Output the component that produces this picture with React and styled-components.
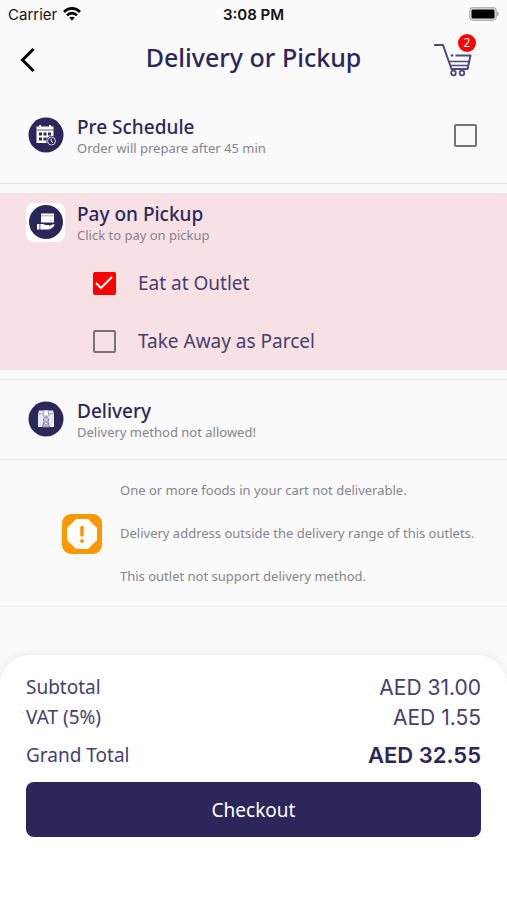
import { useState } from "react";
import styled, { createGlobalStyle } from "styled-components";

function App() {
  const [schedule, setSchedule] = useState(false);
  const [pickup, setPickup] = useState("eat");

  return (
    <>
      <GlobalStyle />
      <Page>
        <StatusBar>
          <Carrier>
            Carrier
            <WifiIcon />
          </Carrier>
          <Clock>3:08 PM</Clock>
          <BatteryIcon />
        </StatusBar>

        <Header>
          <BackButton type="button" aria-label="Back">
            <svg width="18" height="26" viewBox="0 0 18 26" fill="none" stroke="#000" strokeWidth="3">
              <path d="M15.500 2 L4.500 13 L15.500 24" />
            </svg>
          </BackButton>
          <Title>Delivery or Pickup</Title>
          <CartButton type="button" aria-label="Cart">
            <CartIcon />
            <Badge>2</Badge>
          </CartButton>
        </Header>

        <main>
          <Method>
            <IconTile>
              <CalendarIcon />
            </IconTile>
            <MethodText>
              <MethodName id="pre">Pre Schedule</MethodName>
              <MethodNote>Order will prepare after 45 min</MethodNote>
            </MethodText>
            <CheckBox
              labelledBy="pre"
              checked={schedule}
              onChange={() => setSchedule(!schedule)}
            />
          </Method>

          <PickupArea>
            <PickupMethod>
              <IconTile $white>
                <PayIcon />
              </IconTile>
              <MethodText>
                <MethodName>Pay on Pickup</MethodName>
                <MethodNote>Click to pay on pickup</MethodNote>
              </MethodText>
            </PickupMethod>
            <Option>
              <CheckBox checked={pickup === "eat"} onChange={() => setPickup("eat")} />
              Eat at Outlet
            </Option>
            <Option>
              <CheckBox checked={pickup === "parcel"} onChange={() => setPickup("parcel")} />
              Take Away as Parcel
            </Option>
          </PickupArea>

          <DeliveryMethod>
            <IconTile>
              <BoxIcon />
            </IconTile>
            <MethodText>
              <MethodName>Delivery</MethodName>
              <MethodNote>Delivery method not allowed!</MethodNote>
            </MethodText>
          </DeliveryMethod>

          <Warning>
            <WarningIcon />
            <WarningList>
              <li>One or more foods in your cart not deliverable.</li>
              <li>Delivery address outside the delivery range of this outlets.</li>
              <li>This outlet not support delivery method.</li>
            </WarningList>
          </Warning>
        </main>

        <Summary>
          <Row>
            <span>Subtotal</span>
            <Amount>AED 31.00</Amount>
          </Row>
          <Row>
            <span>VAT (5%)</span>
            <Amount>AED 1.55</Amount>
          </Row>
          <Row $total>
            <span>Grand Total</span>
            <Amount $bold>AED 32.55</Amount>
          </Row>
          <Checkout type="button">Checkout</Checkout>
        </Summary>
      </Page>
    </>
  );
}

export default App;

function CheckBox({ checked, onChange, labelledBy }) {
  return (
    <CheckWrap>
      <CheckInput
        type="checkbox"
        checked={checked}
        onChange={onChange}
        aria-labelledby={labelledBy}
      />
      {checked && (
        <svg width="24" height="24" viewBox="0 0 24 24" fill="none" stroke="#fff" strokeWidth="2">
          <path d="M4 12 L9 17 L20 6" />
        </svg>
      )}
    </CheckWrap>
  );
}

function WifiIcon() {
  return (
    <svg width="18" height="14" viewBox="0 0 18 14" fill="none" stroke="#000" strokeWidth="2.6">
      <path d="M1 5 C5.500 0.200 12.500 0.200 17 5" />
      <path d="M4 8.400 C6.800 5.400 11.200 5.400 14 8.400" />
      <path d="M9 13.500 L6.300 10.700 C7.800 9.300 10.200 9.300 11.700 10.700 Z" fill="#000" stroke="none" />
    </svg>
  );
}

function BatteryIcon() {
  return (
    <svg width="30" height="14" viewBox="0 0 30 14">
      <rect x="0.700" y="0.700" width="26.600" height="12.600" rx="3.500" fill="#ddd" stroke="#b4b4b4" strokeWidth="1.200" />
      <rect x="2.500" y="2.500" width="23" height="9" rx="1.500" fill="#000" />
      <path d="M28 4.500 C30.300 5.500 30.300 8.500 28 9.500 Z" fill="#aaa" />
    </svg>
  );
}

function CartIcon() {
  return (
    <svg width="40" height="34" viewBox="0 0 40 34" fill="none" stroke="#4d4a7c" strokeWidth="2">
      <path d="M1 2 H10 L18.500 26 H34.500 L37.500 12.500 H22.500" strokeLinejoin="round" />
      <path d="M16 18.500 H36 M17.500 22.500 H35" strokeWidth="1.500" />
      <circle cx="19" cy="12.500" r="1.300" fill="#4d4a7c" stroke="none" />
      <circle cx="20.500" cy="30" r="2.300" strokeWidth="1.800" />
      <circle cx="29" cy="30" r="2.300" strokeWidth="1.800" />
    </svg>
  );
}

function CalendarIcon() {
  return (
    <svg width="36" height="36" viewBox="0 0 36 36">
      <circle cx="18" cy="18" r="17.500" fill="#2b275a" />
      <path d="M8.500 9.500 H25.500 V26 H8.500 Z" fill="#fff" />
      <path d="M12 8 V12 M22 8 V12" stroke="#fff" strokeWidth="2" />
      <path d="M8.500 13 H25.500" stroke="#2b275a" strokeWidth="0.800" />
      <g fill="#2b275a">
        <rect x="11" y="15.500" width="3" height="3" />
        <rect x="15.500" y="15.500" width="3" height="3" />
        <rect x="20" y="15.500" width="3" height="3" />
        <rect x="11" y="20.500" width="3" height="3" />
        <rect x="15.500" y="20.500" width="3" height="3" />
      </g>
      <circle cx="23.500" cy="24" r="5.200" fill="#2b275a" />
      <circle cx="23.500" cy="24" r="4" fill="#2b275a" stroke="#d6d5e2" strokeWidth="1" />
      <path d="M23.200 21.500 V24.500 L25 25.500" fill="none" stroke="#fff" strokeWidth="1" />
    </svg>
  );
}

function PayIcon() {
  return (
    <svg width="36" height="36" viewBox="0 0 36 36">
      <circle cx="18" cy="18" r="17" fill="#2b275a" />
      <rect x="13" y="9.500" width="13" height="9" fill="#fff" />
      <path d="M13 11.800 H26" stroke="#aaa8c4" strokeWidth="1" />
      <path d="M22 16.500 H24.500" stroke="#f0b8b0" strokeWidth="1" />
      <rect x="9" y="20" width="2.500" height="5.500" fill="#fff" />
      <path d="M12.300 20 H15 L17.500 21 H20.500 C21.800 21 21.600 22.300 20.500 22.300 L25 20.300 C26.500 19.800 27 21 26 21.900 C24 24 22.500 25.500 20 25.500 H12.300 Z" fill="#fff" />
    </svg>
  );
}

function BoxIcon() {
  return (
    <svg width="36" height="36" viewBox="0 0 36 36">
      <circle cx="18" cy="18" r="17.500" fill="#2b275a" />
      <path d="M11 9.500 H25 L26 12.500 V26 H10 V12.500 Z" fill="#e9e8f1" />
      <path d="M10 12.800 H26" stroke="#8f8cae" strokeWidth="0.800" />
      <path d="M16 9.500 L15 15 H21 L20 9.500" fill="#fff" stroke="#8f8cae" strokeWidth="0.800" />
      <path d="M18 16 C15.500 16 14.800 19 16 20.500 L14.500 26 H21.500 L20 20.500 C21.200 19 20.500 16 18 16 Z" fill="#c7c5da" stroke="#77749c" strokeWidth="0.900" />
      <circle cx="18" cy="22.500" r="1.500" fill="#fff" stroke="#77749c" strokeWidth="0.800" />
    </svg>
  );
}

function WarningIcon() {
  return (
    <svg width="40" height="40" viewBox="0 0 40 40">
      <rect width="40" height="40" rx="9" fill="#ff9800" />
      <path d="M14 5 H26 L35 14 V26 L26 35 H14 L5 26 V14 Z" fill="#fff" />
      <path d="M20 13.500 V21" stroke="#ff9800" strokeWidth="3.600" strokeLinecap="round" />
      <circle cx="20" cy="27" r="2" fill="#ff9800" />
    </svg>
  );
}

const GlobalStyle = createGlobalStyle`
  * {
    box-sizing: border-box;
  }

  body {
    margin: 0;
    background-color: #fafafa;
    color: #2b275a;
    font-family: "Noto Sans", "Open Sans", sans-serif;
  }

  button {
    font-family: inherit;
    border: 0;
    padding: 0;
    background: none;
    cursor: pointer;
  }

  svg {
    display: block;
    flex-shrink: 0;
  }
`;

const Page = styled.div`
  min-height: 100vh;
  display: flex;
  flex-direction: column;
`;

const StatusBar = styled.div`
  height: 28px;
  padding: 0 8px;
  display: grid;
  grid-template-columns: 1fr auto 1fr;
  align-items: center;
  font-family: Inter, "Liberation Sans", sans-serif;
  font-size: 15px;
  color: #111111;

  > svg {
    justify-self: end;
  }
`;

const Carrier = styled.div`
  display: flex;
  align-items: center;
  gap: 6px;
`;

const Clock = styled.span`
  font-weight: 600;
`;

const Header = styled.header`
  height: 64px;
  padding: 0 32px 0 18px;
  display: grid;
  grid-template-columns: 56px 1fr 42px;
  align-items: center;
`;

const BackButton = styled.button`
  justify-self: start;
`;

const Title = styled.h1`
  margin: 0 0 6px;
  font-size: 25px;
  line-height: 32px;
  font-weight: 500;
  text-align: center;
`;

const CartButton = styled.button`
  position: relative;
`;

const Badge = styled.span`
  position: absolute;
  top: -9px;
  right: -1px;
  width: 18px;
  height: 18px;
  border-radius: 50%;
  background-color: #ff0000;
  color: white;
  font-size: 12px;
  line-height: 18px;
  text-align: center;
`;

const Method = styled.section`
  display: flex;
  align-items: center;
  gap: 12px;
  padding: 21px 30px 26px 26px;
  border-bottom: 1px solid #e6e6e6;

  > span:last-child {
    margin-left: auto;
  }
`;

const PickupMethod = styled(Method)`
  padding-top: 7px;
  padding-bottom: 10px;
  border-bottom: 0;
`;

const DeliveryMethod = styled(Method)`
  padding-top: 17px;
  padding-bottom: 18px;
  border-top: 1px solid #e6e6e6;
`;

const IconTile = styled.div`
  width: 39px;
  height: 39px;
  display: grid;
  place-items: center;
  border-radius: 8px;
  background-color: ${(props) => (props.$white ? "white" : "transparent")};
`;

const MethodText = styled.div`
  padding-top: 2px;
`;

const MethodName = styled.h2`
  margin: 0;
  font-size: 19px;
  line-height: 24px;
  font-weight: 500;
`;

const MethodNote = styled.p`
  margin: 0;
  font-size: 13px;
  line-height: 18px;
  color: #85838f;
`;

const PickupArea = styled.div`
  margin: 9px 0;
  background-color: #f8e1e5;
`;

const Option = styled.label`
  height: 58px;
  padding-left: 92px;
  display: flex;
  align-items: center;
  gap: 22px;
  font-size: 19px;
  color: #45406f;
  cursor: pointer;
`;

const CheckWrap = styled.span`
  display: grid;
  width: 24px;
  height: 24px;
  place-items: center;

  > * {
    grid-area: 1 / 1;
  }

  svg {
    pointer-events: none;
  }
`;

const CheckInput = styled.input`
  appearance: none;
  margin: 0;
  width: 23px;
  height: 23px;
  border: 2px solid ${(props) => (props.checked ? "#ff0000" : "#757575")};
  border-radius: 2px;
  background-color: ${(props) => (props.checked ? "#ff0000" : "transparent")};
`;

const Warning = styled.section`
  display: flex;
  align-items: center;
  gap: 18px;
  padding: 9px 8px 8px 62px;
  border-bottom: 1px solid #eeeeee;
`;

const WarningList = styled.ul`
  margin: 0;
  padding: 0;
  list-style: none;
  font-size: 13px;
  line-height: 43px;
  color: #85838f;
`;

const Summary = styled.section`
  margin-top: auto;
  padding: 17px 26px 63px;
  border-radius: 30px 30px 0 0;
  background-color: white;
  box-shadow: 0 -2px 10px rgba(0, 0, 0, 0.06);
`;

const Row = styled.div`
  display: flex;
  justify-content: space-between;
  align-items: center;
  height: 30px;
  margin-top: ${(props) => (props.$total ? "8px" : "0")};
  font-size: 19px;
  color: #45406f;
`;

const Amount = styled.span`
  font-family: Inter, "Liberation Sans", sans-serif;
  font-size: ${(props) => (props.$bold ? "22px" : "21px")};
  font-weight: ${(props) => (props.$bold ? "600" : "400")};
  color: ${(props) => (props.$bold ? "#2b275a" : "#45406f")};
`;

const Checkout = styled.button`
  width: 100%;
  height: 55px;
  margin-top: 12px;
  border-radius: 8px;
  background-color: #2b275a;
  color: white;
  font-size: 19px;
`;
